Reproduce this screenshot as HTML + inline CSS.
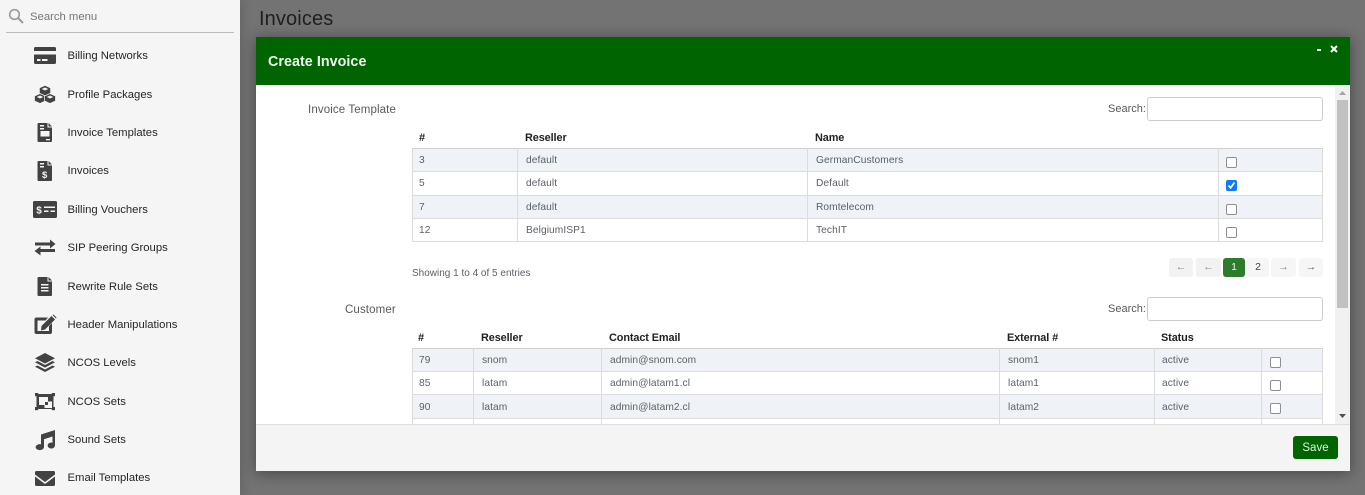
<!DOCTYPE html>
<html><head><meta charset="utf-8">
<style>
html,body{margin:0;padding:0;width:1365px;height:495px;overflow:hidden;background:#737373;font-family:"Liberation Sans",sans-serif}
.a{position:absolute;white-space:nowrap}
#side{position:absolute;left:0;top:0;width:240px;height:495px;background:#f5f5f5;box-shadow:3px 0 8px rgba(0,0,0,.12)}
.m{position:absolute;left:67.5px;font-size:11.3px;line-height:14px;color:#262626}
#modal{position:absolute;left:256px;top:37px;width:1094px;height:434px;background:#fff;box-shadow:0 2px 14px rgba(0,0,0,.4);overflow:hidden}
.t{position:absolute;font-size:10.2px;line-height:14px;color:#5c6068;white-space:nowrap;letter-spacing:.08px}
.h{position:absolute;font-size:10.9px;line-height:14px;color:#222;font-weight:bold;white-space:nowrap;letter-spacing:-.1px}
.l{position:absolute;font-size:11.5px;line-height:16px;color:#5a5a5a;white-space:nowrap;letter-spacing:.12px}
.inp{position:absolute;left:891px;width:174px;height:22px;border:1px solid #ccc;border-radius:3px;background:#fff}
.row{position:absolute;background:#eff2f7}
.ln{position:absolute;background:#dcdcdc}
.cb{position:absolute;width:8.5px;height:8.5px;border:1px solid #8f8f8f;border-radius:2px;background:#fff}
.pg{position:absolute;top:221px;height:19px;background:#f2f2f2;border-radius:3px;font-size:10.5px;line-height:19px;text-align:center;color:#8a8a8a}
</style></head><body>
<div class="a" style="left:259px;top:7px;font-size:20px;line-height:24px;color:#1f1f1f;letter-spacing:.12px">Invoices</div>

<div id="side">
<div class="a" style="left:30px;top:10px;font-size:11.3px;line-height:14px;color:#777">Search menu</div>
<div class="a" style="left:6px;top:32px;width:228px;height:1px;background:#bbb"></div>
<div class="m" style="top:49px">Billing Networks</div>
<div class="m" style="top:88px">Profile Packages</div>
<div class="m" style="top:126px">Invoice Templates</div>
<div class="m" style="top:164px">Invoices</div>
<div class="m" style="top:203px">Billing Vouchers</div>
<div class="m" style="top:241px">SIP Peering Groups</div>
<div class="m" style="top:280px">Rewrite Rule Sets</div>
<div class="m" style="top:318px">Header Manipulations</div>
<div class="m" style="top:356px">NCOS Levels</div>
<div class="m" style="top:395px">NCOS Sets</div>
<div class="m" style="top:433px">Sound Sets</div>
<div class="m" style="top:471px">Email Templates</div>
<svg class="a" style="left:0;top:0" width="240" height="495" viewBox="0 0 240 495">
<g fill="none" stroke="#9a9a9a" stroke-width="1.6"><circle cx="14.5" cy="14.5" r="4.8"/><path d="M18 18l5 5" stroke-width="2"/></g>
<g fill="#424242">
<path d="M35.5 47h19a1.5 1.5 0 0 1 1.500 1.500V51H34v-2.500A1.500 1.500 0 0 1 35.500 47zM34 54.500h22v8a1.500 1.500 0 0 1-1.500 1.500h-19a1.500 1.500 0 0 1-1.500-1.500z"/>
<path stroke="#f5f5f5" stroke-width=".5" d="M45 85.500L50.500 88V93.500L45 96L39.500 93.500V88z"/>
<path stroke="#f5f5f5" stroke-width=".7" d="M40 93.500L45.500 96V101L40 103.500L34.500 101V96z"/>
<path stroke="#f5f5f5" stroke-width=".7" d="M50 93.500L55.500 96V101L50 103.500L44.500 101V96z"/>
<path d="M38.500 123H47.500V127.500H52V141a1 1 0 0 1-1 1H38.500a1 1 0 0 1-1-1V124a1 1 0 0 1 1-1zM48.500 123L52 126.500H48.500z"/>
<path d="M38.500 161H47.500V165.500H52V180a1 1 0 0 1-1 1H38.500a1 1 0 0 1-1-1V162a1 1 0 0 1 1-1zM48.500 161L52 164.500H48.500z"/>
<rect x="33" y="201" width="24" height="17" rx="1.500"/>
<path d="M35 242.500H50V239.500L55.500 244L50 248.500V245.500H35zM55 249H40.500V246.500L34.500 251L40.500 255.500V252H55z"/>
<path d="M38.500 277H47.500V281.500H52V295a1 1 0 0 1-1 1H38.500a1 1 0 0 1-1-1V278a1 1 0 0 1 1-1zM48.500 277L52 280.500H48.500z"/>
<path d="M36.500 317.500H48L45.500 320.500H37.500V331H49V326L52 323V332a2 2 0 0 1-2 2H36.500a2 2 0 0 1-2-2V319.500a2 2 0 0 1 2-2z"/>
<path d="M41.500 326L51.500 316L55 319.500L45 329.500L41 330.500zM52.500 315L53.500 314.500L56.500 317.500L56 318.500z"/>
<path d="M45 353L55 358.200L45 363.500L35 358.200z"/>
<path d="M37.500 361L45 365L52.500 361L55 362.300L45 367.600L35 362.300z"/>
<path d="M37.500 365.500L45 369.500L52.500 365.500L55 366.800L45 372L35 366.800z"/>
<rect x="36.500" y="394" width="17" height="15"/>
<rect x="35" y="393" width="3.200" height="3.200"/><rect x="51.800" y="393" width="3.200" height="3.200"/><rect x="35" y="407" width="3.200" height="3.200"/><rect x="51.800" y="407" width="3.200" height="3.200"/>
<path d="M41 434.500L55 430V445.500A3.700 3 0 1 1 52.500 442.700V436.500L44 439.200V447A4.200 3 0 1 1 41 444.300z"/>
<path d="M36.500 471H53.500A1.500 1.500 0 0 1 55 472.500V474.500L45 482L35 474.500V472.500A1.500 1.500 0 0 1 36.500 471zM35 476.500L45 484L55 476.500V484.500A1.500 1.500 0 0 1 53.500 486H36.500A1.500 1.500 0 0 1 35 484.500z"/>
</g>
<g fill="#f5f5f5">
<rect x="37" y="59" width="3.500" height="2"/><rect x="42" y="59" width="5.500" height="2"/>
<path d="M45 87.500l3.300 1.500-3.300 1.500-3.300-1.500zM40 95.500l3.300 1.500-3.300 1.500-3.300-1.500zM50 95.500l3.300 1.500-3.300 1.500-3.300-1.500z"/>
<rect x="40" y="125" width="4" height="1.500"/><rect x="40" y="128" width="4" height="1.500"/><rect x="40.500" y="131" width="9" height="5.500"/><rect x="46" y="139" width="4" height="1.300"/>
<rect x="40" y="163" width="4" height="1.500"/><rect x="40" y="166" width="4" height="1.500"/>
<rect x="44" y="206.500" width="11" height="1.500"/><rect x="44" y="210.500" width="4.500" height="1.500"/><rect x="50.500" y="210.500" width="4.500" height="1.500"/>
<rect x="41" y="284" width="7.500" height="1.500"/><rect x="41" y="287" width="7.500" height="1.500"/><rect x="41" y="290" width="7.500" height="1.500"/>
<rect x="39" y="397" width="9" height="8"/><rect x="44.500" y="401.500" width="7.500" height="6.500"/>
</g>
<rect x="45" y="402" width="3" height="3" fill="#424242"/>
<text x="44.700" y="178" font-size="9.500" font-weight="bold" text-anchor="middle" fill="#f5f5f5" font-family="Liberation Sans">$</text>
<text x="39" y="213.500" font-size="10" font-weight="bold" text-anchor="middle" fill="#f5f5f5" font-family="Liberation Sans">$</text>
</svg>
</div>

<div id="modal">
<div class="a" style="left:0;top:0;width:1094px;height:48px;background:#006400"></div>
<div class="a" style="left:12px;top:15.5px;font-size:14.3px;line-height:18px;font-weight:bold;color:#f2f7f2;letter-spacing:.05px">Create Invoice</div>
<div class="a" style="left:1061px;top:11.5px;width:4px;height:2px;background:#fff"></div>
<svg class="a" style="left:1074px;top:8px" width="8" height="8" viewBox="0 0 8 8"><path d="M1 1l6 6M7 1l-6 6" stroke="#fff" stroke-width="2"/></svg>

<div class="l" style="left:52px;top:65px">Invoice Template</div>
<div class="l" style="left:852px;top:64px;font-size:11px;letter-spacing:0">Search:</div>
<div class="inp" style="top:60px"></div>
<div class="h" style="left:163px;top:94px">#</div>
<div class="h" style="left:269px;top:94px">Reseller</div>
<div class="h" style="left:559px;top:94px">Name</div>
<div class="row" style="left:156px;top:111px;width:911px;height:23px"></div>
<div class="row" style="left:156px;top:158px;width:911px;height:23px"></div>
<div class="ln" style="left:156px;top:111px;width:911px;height:1px;background:#cfcfcf"></div>
<div class="ln" style="left:156px;top:134px;width:911px;height:1px"></div>
<div class="ln" style="left:156px;top:158px;width:911px;height:1px"></div>
<div class="ln" style="left:156px;top:181px;width:911px;height:1px"></div>
<div class="ln" style="left:156px;top:204px;width:911px;height:1px"></div>
<div class="ln" style="left:156px;top:111px;width:1px;height:94px"></div>
<div class="ln" style="left:261px;top:111px;width:1px;height:94px"></div>
<div class="ln" style="left:551px;top:111px;width:1px;height:94px"></div>
<div class="ln" style="left:962px;top:111px;width:1px;height:94px"></div>
<div class="ln" style="left:1066px;top:111px;width:1px;height:94px"></div>
<div class="t" style="left:163px;top:117px">3</div><div class="t" style="left:270px;top:117px">default</div><div class="t" style="left:560px;top:117px">GermanCustomers</div>
<div class="t" style="left:163px;top:140px">5</div><div class="t" style="left:270px;top:140px">default</div><div class="t" style="left:560px;top:140px">Default</div>
<div class="t" style="left:163px;top:164px">7</div><div class="t" style="left:270px;top:164px">default</div><div class="t" style="left:560px;top:164px">Romtelecom</div>
<div class="t" style="left:163px;top:187px">12</div><div class="t" style="left:270px;top:187px">BelgiumISP1</div><div class="t" style="left:560px;top:187px">TechIT</div>
<div class="cb" style="left:970px;top:120px"></div>
<div class="cb" style="left:970px;top:143px;background:#0a7cff;border-color:#0a7cff"><svg style="display:block" width="9" height="9" viewBox="0 0 9 9"><path d="M1.500 4.500L3.600 6.800L7.500 1.500" fill="none" stroke="#fff" stroke-width="1.700"/></svg></div>
<div class="cb" style="left:970px;top:167px"></div>
<div class="cb" style="left:970px;top:190px"></div>
<div class="t" style="left:156px;top:230px;font-size:10px;letter-spacing:0">Showing 1 to 4 of 5 entries</div>
<div class="pg" style="left:913px;width:24px">←</div>
<div class="pg" style="left:940px;width:25px">←</div>
<div class="pg" style="left:967px;width:22px;background:#2b7d2b;color:#e8f2e8">1</div>
<div class="pg" style="left:991px;width:22px;background:#f6f6f6;color:#444">2</div>
<div class="pg" style="left:1015px;width:25px;background:#f6f6f6">→</div>
<div class="pg" style="left:1043px;width:24px;background:#f6f6f6;color:#666">→</div>

<div class="l" style="left:89px;top:265px">Customer</div>
<div class="l" style="left:852px;top:264px;font-size:11px;letter-spacing:0">Search:</div>
<div class="inp" style="top:260px"></div>
<div class="h" style="left:162px;top:294px">#</div>
<div class="h" style="left:225px;top:294px">Reseller</div>
<div class="h" style="left:353px;top:294px">Contact Email</div>
<div class="h" style="left:751px;top:294px">External #</div>
<div class="h" style="left:905px;top:294px">Status</div>
<div class="row" style="left:156px;top:311px;width:911px;height:23px"></div>
<div class="row" style="left:156px;top:357px;width:911px;height:24px"></div>
<div class="ln" style="left:156px;top:311px;width:911px;height:1px;background:#cfcfcf"></div>
<div class="ln" style="left:156px;top:334px;width:911px;height:1px"></div>
<div class="ln" style="left:156px;top:357px;width:911px;height:1px"></div>
<div class="ln" style="left:156px;top:381px;width:911px;height:1px"></div>
<div class="ln" style="left:156px;top:311px;width:1px;height:80px"></div>
<div class="ln" style="left:217px;top:311px;width:1px;height:80px"></div>
<div class="ln" style="left:345px;top:311px;width:1px;height:80px"></div>
<div class="ln" style="left:743px;top:311px;width:1px;height:80px"></div>
<div class="ln" style="left:898px;top:311px;width:1px;height:80px"></div>
<div class="ln" style="left:1005px;top:311px;width:1px;height:80px"></div>
<div class="ln" style="left:1066px;top:311px;width:1px;height:80px"></div>
<div class="t" style="left:163px;top:317px">79</div><div class="t" style="left:226px;top:317px">snom</div><div class="t" style="left:354px;top:317px">admin@snom.com</div><div class="t" style="left:752px;top:317px">snom1</div><div class="t" style="left:906px;top:317px">active</div>
<div class="t" style="left:163px;top:340px">85</div><div class="t" style="left:226px;top:340px">latam</div><div class="t" style="left:354px;top:340px">admin@latam1.cl</div><div class="t" style="left:752px;top:340px">latam1</div><div class="t" style="left:906px;top:340px">active</div>
<div class="t" style="left:163px;top:364px">90</div><div class="t" style="left:226px;top:364px">latam</div><div class="t" style="left:354px;top:364px">admin@latam2.cl</div><div class="t" style="left:752px;top:364px">latam2</div><div class="t" style="left:906px;top:364px">active</div>
<div class="cb" style="left:1014px;top:320px"></div>
<div class="cb" style="left:1014px;top:343px"></div>
<div class="cb" style="left:1014px;top:366px"></div>

<div class="a" style="left:1079px;top:48px;width:15px;height:339px;background:#f1f1f1"></div>
<div class="a" style="left:1081px;top:63px;width:11px;height:208px;background:#c1c1c1"></div>
<svg class="a" style="left:1079px;top:48px" width="15" height="339" viewBox="0 0 15 339"><path d="M4 10L7.500 6L11 10z" fill="#a3a3a3"/><path d="M4 329H11L7.500 333z" fill="#505050"/></svg>

<div class="a" style="left:0;top:387px;width:1094px;height:47px;background:#f4f4f4;border-top:1px solid #dedede"></div>
<div class="a" style="left:1037px;top:399px;width:45px;height:23px;background:#006400;border-radius:3px;color:#e4f0e4;font-size:11.5px;line-height:24px;text-align:center">Save</div>
</div>
</body></html>
